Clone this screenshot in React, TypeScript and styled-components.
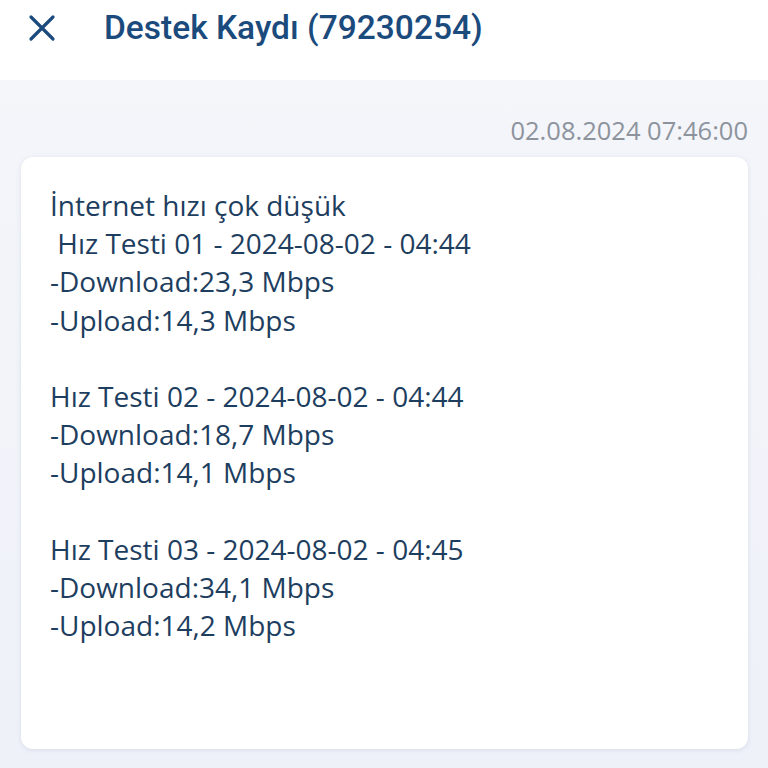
import React from "react";
import styled, { createGlobalStyle } from "styled-components";

const Global = createGlobalStyle`
  html, body { margin: 0; padding: 0; }
  body {
    width: 768px;
    height: 768px;
    overflow: hidden;
    background: #eef1f8;
    font-family: "Open Sans", "Noto Sans", sans-serif;
  }
`;

const Page = styled.div`
  width: 768px;
  height: 768px;
  display: flex;
  flex-direction: column;
  background: linear-gradient(180deg, #f4f6fa 0%, #eef1f8 100%);
`;

const Header = styled.header`
  height: 80px;
  flex: none;
  background: #ffffff;
  display: flex;
  align-items: center;
  padding-left: 28px;
  gap: 48px;
`;

const CloseButton = styled.button`
  border: none;
  background: none;
  padding: 0;
  width: 28px;
  height: 28px;
  display: flex;
  align-items: center;
  justify-content: center;
  margin-top: -24px;
`;

const Title = styled.h1`
  margin: 0;
  margin-top: -26px;
  font-family: Roboto, "Noto Sans", sans-serif;
  font-weight: 500;
  font-size: 33.5px;
  color: #1b4a7c;
  letter-spacing: 0;
`;

const Content = styled.main`
  flex: 1;
  display: flex;
  flex-direction: column;
  padding: 0 20px 19px 21px;
`;

const Timestamp = styled.div`
  text-align: right;
  font-size: 25.5px;
  color: #8d939d;
  line-height: 34px;
  padding-top: 33px;
  padding-bottom: 10px;
`;

const Card = styled.section`
  flex: 1;
  background: #ffffff;
  border-radius: 12px;
  box-shadow: 0 1px 4px rgba(150, 160, 190, 0.25);
  padding: 29px 29px;
`;

const Message = styled.p`
  margin: 0;
  white-space: pre-wrap;
  font-size: 28px;
  line-height: 38.2px;
  color: #1e3e60;
`;

const text = `İnternet hızı çok düşük
 Hız Testi 01 - 2024-08-02 - 04:44
-Download:23,3 Mbps
-Upload:14,3 Mbps

Hız Testi 02 - 2024-08-02 - 04:44
-Download:18,7 Mbps
-Upload:14,1 Mbps

Hız Testi 03 - 2024-08-02 - 04:45
-Download:34,1 Mbps
-Upload:14,2 Mbps`;

export default function App() {
  return (
    <>
      <Global />
      <Page>
        <Header>
          <CloseButton aria-label="Kapat">
            <svg width="28" height="28" viewBox="0 0 28 28">
              <path
                d="M3 3 L25 25 M25 3 L3 25"
                stroke="#1b4a7c"
                strokeWidth="3.2"
                strokeLinecap="round"
              />
            </svg>
          </CloseButton>
          <Title>Destek Kaydı (79230254)</Title>
        </Header>
        <Content>
          <Timestamp>02.08.2024 07:46:00</Timestamp>
          <Card>
            <Message>{text}</Message>
          </Card>
        </Content>
      </Page>
    </>
  );
}
